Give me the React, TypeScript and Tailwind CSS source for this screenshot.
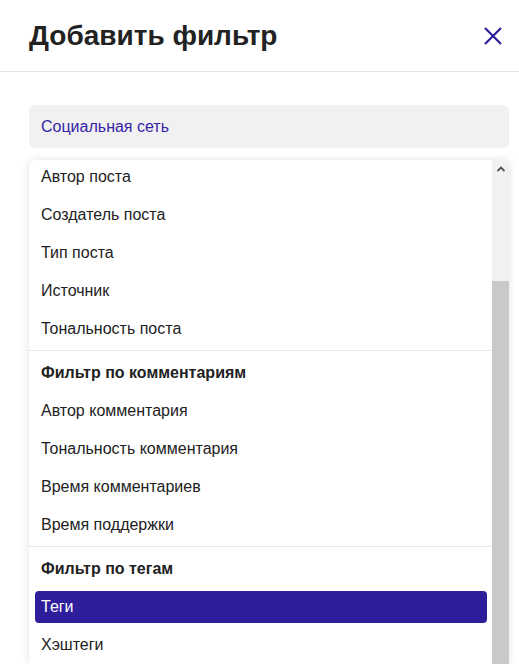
import React from "react";

type Row = { label: string; kind?: "header" | "selected" };

const groups: Row[][] = [
  [
    { label: "Автор поста" },
    { label: "Создатель поста" },
    { label: "Тип поста" },
    { label: "Источник" },
    { label: "Тональность поста" },
  ],
  [
    { label: "Фильтр по комментариям", kind: "header" },
    { label: "Автор комментария" },
    { label: "Тональность комментария" },
    { label: "Время комментариев" },
    { label: "Время поддержки" },
  ],
  [
    { label: "Фильтр по тегам", kind: "header" },
    { label: "Теги", kind: "selected" },
    { label: "Хэштеги" },
  ],
];

function OptionRow({ row }: { row: Row }) {
  if (row.kind === "header") {
    return (
      <div className="h-[38px] flex items-center pl-[12px] font-bold text-[16px] text-[#222222]">
        {row.label}
      </div>
    );
  }
  if (row.kind === "selected") {
    return (
      <div className="h-[38px] py-[3px] pl-[6px] pr-[5px]">
        <div className="h-[32px] flex items-center px-[6px] rounded-[4px] bg-[#2f1e9c] text-white text-[16px]">
          {row.label}
        </div>
      </div>
    );
  }
  return (
    <div className="h-[38px] flex items-center pl-[12px] text-[16px] text-[#222222]">
      {row.label}
    </div>
  );
}

export default function App() {
  return (
    <div
      className="w-[519px] h-[664px] overflow-hidden bg-white flex flex-col"
      style={{ fontFamily: '"Liberation Sans", Arial, sans-serif' }}
    >
      {/* dialog header */}
      <div className="h-[72px] shrink-0 flex items-center justify-between pl-[29px] pr-[17px] border-b border-[#e4e4e4]">
        <h2 className="text-[28px] font-bold text-[#222222] leading-none">
          Добавить фильтр
        </h2>
        <button className="w-[18px] h-[18px] flex items-center justify-center text-[#2f1e9c]">
          <svg width="18" height="18" viewBox="0 0 18 18" fill="none">
            <path d="M1 1L17 17M17 1L1 17" stroke="currentColor" strokeWidth="2.2" />
          </svg>
        </button>
      </div>

      {/* dialog body */}
      <div className="flex-1 flex flex-col pl-[29px] pr-[10px] pt-[33px] min-h-0">
        <div className="h-[43px] shrink-0 flex items-center px-[12px] rounded-[6px] bg-[#f1f1f1] text-[16px] text-[#3524a8]">
          Социальная сеть
        </div>

        {/* options dropdown */}
        <div className="mt-[12px] flex-1 flex min-h-0 bg-white rounded-t-[6px] shadow-[0_0_8px_rgba(0,0,0,0.12)] overflow-hidden">
          <div className="flex-1 min-w-0 overflow-hidden">
            <div className="-mt-[2px]">
              {groups.map((group, gi) => (
                <div key={gi}>
                  {gi > 0 && <div className="mt-[2px] mb-[3px] h-px bg-[#e6e6e6]" />}
                  {group.map((row) => (
                    <OptionRow key={row.label} row={row} />
                  ))}
                </div>
              ))}
            </div>
          </div>

          {/* scrollbar */}
          <div className="w-[17px] shrink-0 flex flex-col bg-[#f1f1f1]">
            <div className="h-[17px] flex items-center justify-center">
              <svg width="8" height="6" viewBox="0 0 8 6">
                <path d="M0.5 5L4 1.5L7.5 5" stroke="#505050" strokeWidth="1.8" fill="none" />
              </svg>
            </div>
            <div className="h-[104px]" />
            <div className="flex-1 bg-[#c9c9c9]" />
          </div>
        </div>
      </div>
    </div>
  );
}
